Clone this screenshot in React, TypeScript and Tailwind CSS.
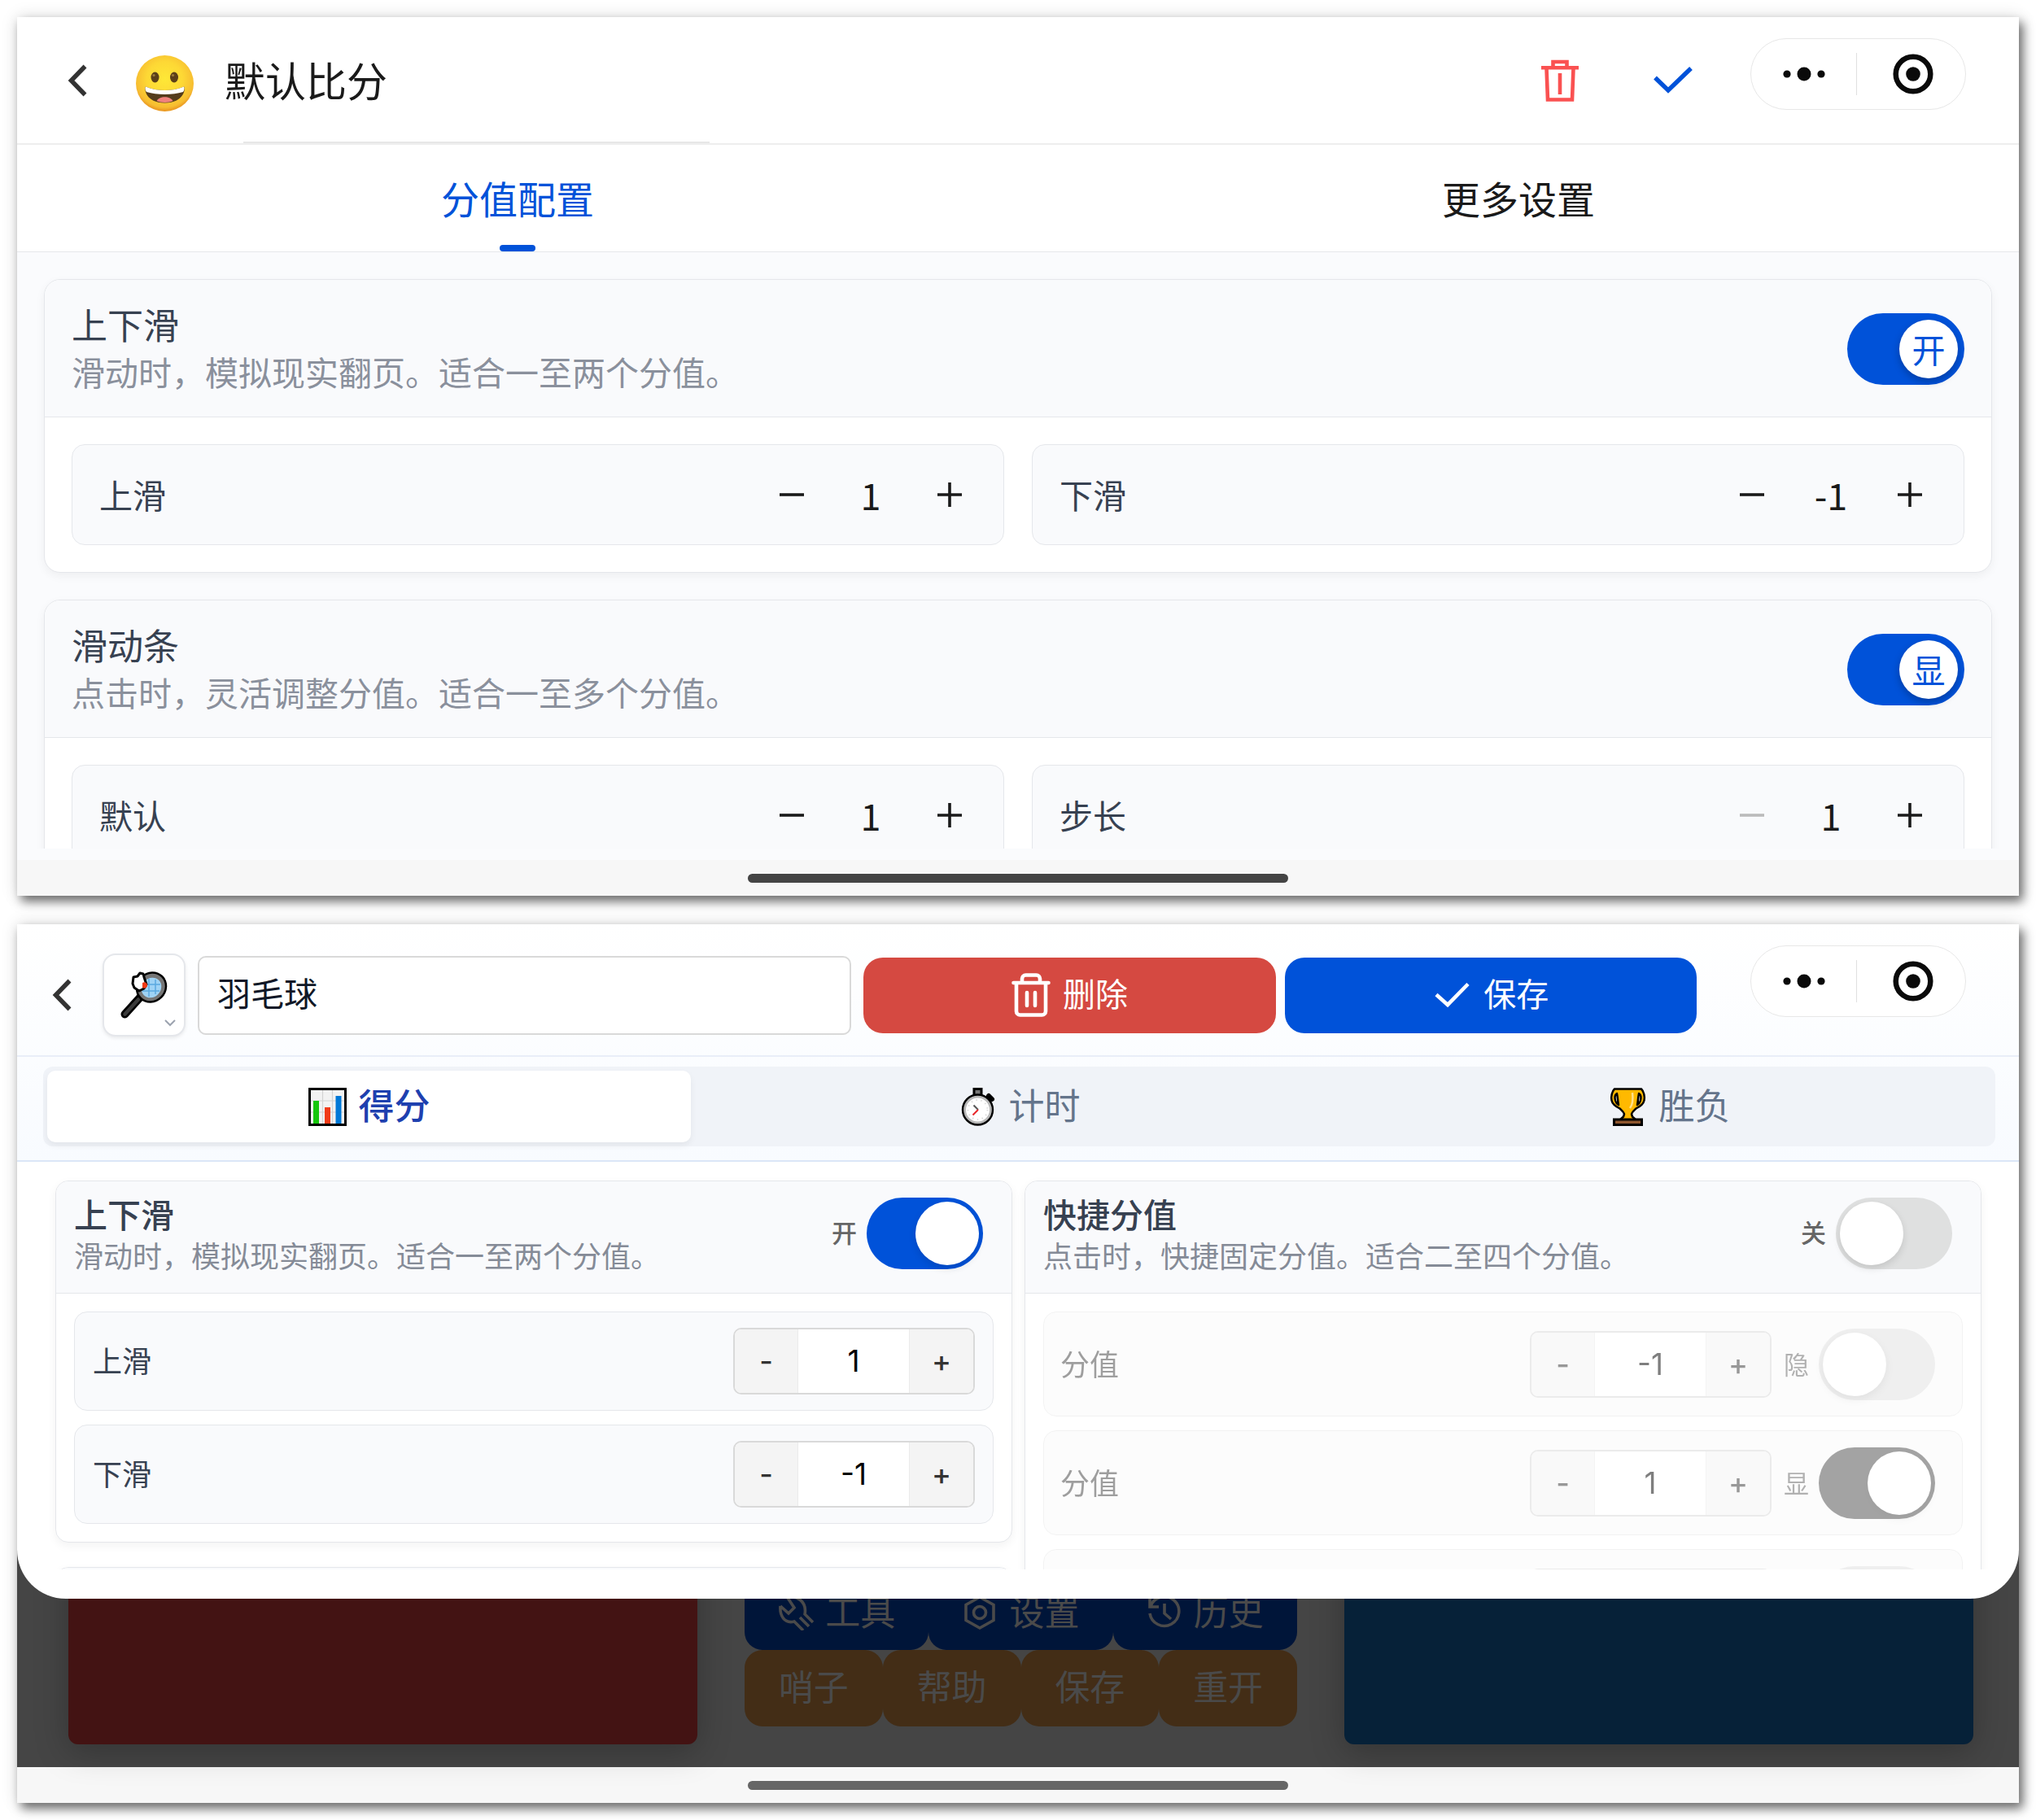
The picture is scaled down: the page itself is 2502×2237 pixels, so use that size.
import React, { useState } from "react";
import clsx from "clsx";

/* ---------- icons ---------- */

function BackIcon() {
  return (
    <svg width="24" height="40" viewBox="0 0 24 40" fill="none" stroke="#333" strokeWidth="5.5">
      <path d="M21.5 2.5 4.5 20l17 17.5" />
    </svg>
  );
}

function GrinEmoji() {
  return (
    <svg width="71" height="79" viewBox="0 0 71 79">
      <defs>
        <radialGradient id="face" cx="50%" cy="42%" r="56%">
          <stop offset="0" stopColor="#fee837" />
          <stop offset="0.55" stopColor="#fdd835" />
          <stop offset="0.9" stopColor="#f7bd31" />
          <stop offset="1" stopColor="#eb9c24" />
        </radialGradient>
      </defs>
      <ellipse cx="35.5" cy="43.5" rx="35.500" ry="34.500" fill="url(#face)" />
      <ellipse cx="23.5" cy="36" rx="5" ry="6.5" fill="#5c4019" />
      <ellipse cx="47" cy="36" rx="5" ry="6.5" fill="#5c4019" />
      <circle cx="22" cy="33.5" r="1.6" fill="#9a7a3c" />
      <circle cx="45.500" cy="33.5" r="1.6" fill="#9a7a3c" />
      <path d="M12 47.500c14 6 33 6 47 0 2.500 2 0 20-23.500 20S10 50 12 47.500z" fill="#543c1c" />
      <path d="M12 47.500c14 6 33 6 47 0 1 1.500.5 5-1 6.500-13 4-32 4-45 0-1.500-1.500-2-5-1-6.500z" fill="#fff" />
      <path d="M25.500 65c3-6.500 17-6.500 20 0-5 2.600-15 2.600-20 0z" fill="#f0827d" />
    </svg>
  );
}

function TrashLineIcon() {
  return (
    <svg width="46" height="52" viewBox="0 0 46 52" fill="none" stroke="#fa5151" strokeWidth="4.6">
      <path d="M14.500 10V3h17v7M0 10.300h46M6.500 11 8 49.500h30L39.500 11M23 17v26" />
    </svg>
  );
}

function CheckLineIcon({ className }: { className?: string }) {
  return (
    <svg className={className} width="48" height="34" viewBox="0 0 48 34" fill="none" stroke="currentColor" strokeWidth="5.400">
      <path d="M2 13.500 18 29 46 2" />
    </svg>
  );
}

function TrashRoundIcon() {
  return (
    <svg width="48" height="54" viewBox="0 0 48 54" fill="none" stroke="#fff" strokeWidth="4.6" strokeLinecap="round" strokeLinejoin="round">
      <path d="M2.500 12h43M13 12V7a4.500 4.500 0 0 1 4.500-4.500h13A4.500 4.500 0 0 1 35 7v5M6 12v35a4.500 4.500 0 0 0 4.500 4.500h27A4.500 4.500 0 0 0 42 47V12M19 24v16M29 24v16" />
    </svg>
  );
}

function SaveCheckIcon() {
  return (
    <svg width="48" height="54" viewBox="0 0 48 54" fill="none" stroke="#fff" strokeWidth="4.6">
      <path d="M5 26.500 19 39 44 13.500" />
    </svg>
  );
}

function RacketEmoji() {
  return (
    <svg width="58" height="58" viewBox="0 0 58 58">
      <path d="M5.500 52.500 24 32" stroke="#000" strokeWidth="10" strokeLinecap="round" />
      <path d="M5.500 52.500 22 34.500" stroke="#3b3b3b" strokeWidth="4.500" strokeLinecap="round" />
      <ellipse cx="38" cy="19.500" rx="20" ry="18.500" fill="#000" transform="rotate(-45 38 19.500)" />
      <ellipse cx="38" cy="19.500" rx="17.500" ry="16" fill="#767676" transform="rotate(-45 38 19.500)" />
      <ellipse cx="38" cy="20" rx="13" ry="11.500" fill="#9fd3f5" transform="rotate(-45 38 20)" />
      <path d="M35 9v22M43 10v18M28 16h21M27 24h21" stroke="#5ba9e0" strokeWidth="1.500" />
      <path d="M15 15l1-8 5-1 3-4 4 1 1 4 3 9-3 5-6 3-6-4z" fill="#fff" stroke="#000" strokeWidth="3" strokeLinejoin="round" />
      <path d="M27 14c3-2 6 0 6 3s-3 5-6 3z" fill="#f03a17" />
    </svg>
  );
}

function ChartEmoji() {
  return (
    <svg width="47" height="47" viewBox="0 0 47 47">
      <rect x="1.500" y="1.500" width="44" height="44" fill="#f2f2f2" stroke="#000" strokeWidth="3" />
      <path d="M17.500 3v41M29.500 3v41M3 16h41M3 30h41" stroke="#d2d2d2" strokeWidth="1.200" />
      <rect x="6" y="16" width="7" height="28" fill="#16c60c" />
      <rect x="20" y="24" width="7" height="20" fill="#f03a17" />
      <rect x="33.500" y="10" width="7" height="34" fill="#0078d7" />
    </svg>
  );
}

function StopwatchEmoji() {
  return (
    <svg width="47" height="47" viewBox="0 0 47 47">
      <rect x="19" y="1.500" width="9" height="9" fill="#777" stroke="#000" strokeWidth="3" />
      <path d="M37 10l4 4" stroke="#000" strokeWidth="6" strokeLinecap="round" />
      <circle cx="23.500" cy="27" r="18.500" fill="#b9b9b9" stroke="#000" strokeWidth="2.400" />
      <circle cx="23.500" cy="27" r="14.500" fill="#fff" />
      <circle cx="23.500" cy="27" r="12" fill="none" stroke="#ddd" strokeWidth="2" strokeDasharray="1.500 4.500" />
      <path d="M18.500 21.500 24 27" stroke="#555" strokeWidth="2" />
      <path d="M24 27l-6.500 6.500" stroke="#e8262a" strokeWidth="2" />
    </svg>
  );
}

function TrophyEmoji() {
  return (
    <svg width="47" height="47" viewBox="0 0 47 47">
      <path d="M7 1.500h33c3 3 4.500 9 3.500 14-1 5-6 8-10 10-2 2-5 4-5.500 7l1 3 5 4.500v5.500H13V40l5-4.500 1-3c-.5-3-3.500-5-5.500-7-4-2-9-5-10-10-1-5 .5-11 3.500-14z" fill="#ffb900" stroke="#000" strokeWidth="2.500" strokeLinejoin="round" />
      <path d="M10 7c-4 2-3 11 2 14-1-5-1-9-2-14zM37 7c4 2 3 11-2 14 1-5 1-9 2-14z" fill="#fff" stroke="#000" strokeWidth="2.500" strokeLinejoin="round" />
      <path d="M29 6c1 8 1 14-3 19" fill="none" stroke="#ffe08a" strokeWidth="2.500" />
      <rect x="6.500" y="39" width="34" height="6.500" fill="#8e562e" stroke="#000" strokeWidth="3" />
    </svg>
  );
}

function ToolIcon() {
  return (
    <svg width="44" height="44" viewBox="0 0 44 44" fill="none" stroke="currentColor" strokeWidth="3.600">
      <path d="M3 14l10 9 7-7L12 4c10-4 24 4 21 20l10 10M3 14c-1 12 5 22 17 19l11 11M27 28l11 11" />
    </svg>
  );
}

function SettingIcon() {
  return (
    <svg width="44" height="44" viewBox="0 0 44 44" fill="none" stroke="currentColor" strokeWidth="3.600">
      <path d="M22 3l17 9.500v19L22 41 5 31.500v-19z" />
      <circle cx="22" cy="22" r="7.500" />
    </svg>
  );
}

function HistoryIcon() {
  return (
    <svg width="44" height="44" viewBox="0 0 44 44" fill="none" stroke="currentColor" strokeWidth="3.600">
      <path d="M4 4v11h11M5 14a18 18 0 1 1-1 9M22 11v12l8 7" />
    </svg>
  );
}

/* ---------- shared parts ---------- */

// mini program menu in the top right corner
function Capsule() {
  return (
    <div className="mt-[26px] flex h-[88px] w-[265px] shrink-0 items-center self-start rounded-full border border-[#e7e7e7] bg-white">
      <button type="button" aria-label="更多" className="flex flex-1 justify-center">
        <svg width="52" height="18" viewBox="0 0 52 18" fill="#0a0a0a">
          <circle cx="5" cy="9" r="4.600" />
          <circle cx="26" cy="9" r="8.500" />
          <circle cx="47" cy="9" r="4.600" />
        </svg>
      </button>
      <span className="h-[52px] w-px bg-[#e0e0e0]" />
      <button type="button" aria-label="关闭" className="flex flex-1 justify-center pl-1">
        <svg width="50" height="50" viewBox="0 0 50 50" fill="none">
          <circle cx="25" cy="25" r="21.300" stroke="#0a0a0a" strokeWidth="6.500" />
          <circle cx="25" cy="25" r="8.800" fill="#0a0a0a" />
        </svg>
      </button>
    </div>
  );
}

function HomeIndicator({ tone }: { tone: string }) {
  return (
    <div className="flex h-11 items-center justify-center bg-[#f7f7f7]">
      <span className={clsx("h-[11px] w-[27%] rounded-full", tone)} />
    </div>
  );
}

/* ---------- first screen ---------- */

function KnobSwitch({ text, label }: { text: string; label: string }) {
  const [on, setOn] = useState(true);
  return (
    <label
      className={clsx(
        "relative flex h-[88px] w-36 shrink-0 items-center rounded-full p-2",
        on ? "justify-end bg-[#0052d9]" : "justify-start bg-[#dfe0e0]"
      )}
    >
      <input type="checkbox" role="switch" aria-label={label} className="sr-only" checked={on} onChange={() => setOn(!on)} />
      <span className="flex size-[72px] items-center justify-center rounded-full bg-white text-[41px] text-[#0052d9] shadow-[0_4px_10px_rgba(0,0,0,0.25)]">
        {text}
      </span>
    </label>
  );
}

function ScoreField({ label, value, minDisabled }: { label: string; value: string; minDisabled?: boolean }) {
  return (
    <div className="flex h-[124px] items-center justify-between rounded-2xl border border-[#e5e7eb] bg-[#f9fafc] px-[33px]">
      <span className="text-[41px] text-[#374151]">{label}</span>
      <div className="flex items-center text-[#1a1a1a]">
        <button
          type="button"
          aria-label="减少"
          disabled={minDisabled}
          className={clsx("flex size-[66px] items-center justify-center", minDisabled && "text-[#bbb]")}
        >
          <svg width="30" height="30" viewBox="0 0 30 30" stroke="currentColor" strokeWidth="3.600">
            <path d="M0 15h30" />
          </svg>
        </button>
        <input aria-label={label} defaultValue={value} className="w-32 bg-transparent text-center text-[45px] leading-[66px]" />
        <button type="button" aria-label="增加" className="flex size-[66px] items-center justify-center">
          <svg width="30" height="30" viewBox="0 0 30 30" stroke="currentColor" strokeWidth="3.600">
            <path d="M0 15h30M15 0v30" />
          </svg>
        </button>
      </div>
    </div>
  );
}

type ConfigCardProps = {
  title: string;
  desc: string;
  knob: string;
  children: React.ReactNode;
};

function ConfigCard({ title, desc, knob, children }: ConfigCardProps) {
  return (
    <section className="shrink-0 overflow-hidden rounded-[20px] border border-[#e5e7eb] bg-white shadow-[0_4px_12px_rgba(0,0,0,0.05)]">
      <header className="flex items-center justify-between border-b border-[#e5e7eb] bg-[#f9fafc] px-[33px] pt-[23px] pb-[22px]">
        <div className="pb-1.5">
          <h2 className="text-[44px] leading-[62px] text-[#374151]">{title}</h2>
          <p className="text-[41px] leading-[55px] text-[#8a909c]">{desc}</p>
        </div>
        <KnobSwitch text={knob} label={title} />
      </header>
      <div className="grid grid-cols-2 gap-[34px] p-[33px]">{children}</div>
    </section>
  );
}

function DefaultScoreScreen() {
  return (
    <article className="bg-white shadow-[5px_7px_12px_rgba(0,0,0,0.55),0_0_20px_rgba(0,0,0,0.12)]">
      <header className="flex h-[157px] items-center border-b-2 border-[#eeeeee] pr-[65px] pl-[62px]">
        <button type="button" aria-label="返回">
          <BackIcon />
        </button>
        <button type="button" aria-label="图标" className="ml-[60px]">
          <GrinEmoji />
        </button>
        <div className="ml-[38px] flex h-full w-[596px] flex-col">
          <input aria-label="名称" defaultValue="默认比分" className="min-h-0 flex-1 text-[50px] text-[#1a1a1a]" />
          <hr className="ml-[23px] border-t-2 border-[#e7e7e7]" />
        </div>
        <button type="button" aria-label="删除" className="ml-auto">
          <TrashLineIcon />
        </button>
        <button type="button" aria-label="保存" className="mr-[71px] ml-[92px]">
          <CheckLineIcon className="text-[#0052d9]" />
        </button>
        <Capsule />
      </header>

      <nav className="grid h-[132px] grid-cols-2 border-b border-[#e5e7eb] text-[47px]">
        <button type="button" className="flex flex-col items-center text-[#0052d9]">
          <span className="flex flex-1 items-center pt-2">分值配置</span>
          <span className="h-2 w-11 rounded-full bg-[#0052d9]" />
        </button>
        <button type="button" className="flex flex-col items-center text-[#1a1a1a]">
          <span className="flex flex-1 items-center pt-2">更多设置</span>
          <span className="h-2 w-11" />
        </button>
      </nav>

      <div className="bg-[#fafbfd] pb-3.5">
        <div className="flex h-[733px] flex-col gap-[33px] overflow-hidden p-[33px]">
          <ConfigCard title="上下滑" desc="滑动时，模拟现实翻页。适合一至两个分值。" knob="开">
            <ScoreField label="上滑" value="1" />
            <ScoreField label="下滑" value="-1" />
          </ConfigCard>
          <ConfigCard title="滑动条" desc="点击时，灵活调整分值。适合一至多个分值。" knob="显">
            <ScoreField label="默认" value="1" />
            <ScoreField label="步长" value="1" minDisabled />
          </ConfigCard>
        </div>
      </div>
      <HomeIndicator tone="bg-[#444444]" />
    </article>
  );
}

/* ---------- second screen ---------- */

type SideSwitchProps = {
  text: string;
  defaultOn?: boolean;
  disabled?: boolean;
};

function SideSwitch({ text, defaultOn = false, disabled }: SideSwitchProps) {
  const [on, setOn] = useState(defaultOn);
  return (
    <label className="relative flex shrink-0 items-center gap-3 text-[31px] text-[#666]">
      <span className={clsx("pb-0.5", !disabled && "font-medium")}>{text}</span>
      <input type="checkbox" role="switch" className="sr-only" checked={on} disabled={disabled} onChange={() => setOn(!on)} />
      <span
        className={clsx(
          "flex h-[88px] w-[143px] items-center rounded-full p-[5px]",
          on ? "justify-end bg-[#0052d9]" : "justify-start bg-[#dfe0e0]"
        )}
      >
        <span className="size-[78px] rounded-full bg-white shadow-[0_4px_10px_rgba(0,0,0,0.12)]" />
      </span>
    </label>
  );
}

function Stepper({ label, value, disabled }: { label: string; value: string; disabled?: boolean }) {
  return (
    <div className="flex h-[82px] w-[297px] shrink-0 overflow-hidden rounded-[10px] border-2 border-[#d9d9d9] bg-white font-['Inter',sans-serif]">
      <button type="button" disabled={disabled} className="w-[78px] border-r border-[#ebebeb] bg-[#f4f4f4] text-[36px] font-medium text-[#333]">
        -
      </button>
      <input
        aria-label={label}
        defaultValue={value}
        disabled={disabled}
        className="min-w-0 flex-1 text-center text-[37px] text-black"
      />
      <button type="button" disabled={disabled} className="w-[79px] border-l border-[#ebebeb] bg-[#f4f4f4] text-[36px] font-medium text-[#333]">
        +
      </button>
    </div>
  );
}

type PanelProps = {
  title: string;
  desc: string;
  status: string;
  on?: boolean;
  children?: React.ReactNode;
};

function Panel({ title, desc, status, on, children }: PanelProps) {
  return (
    <section className="overflow-hidden rounded-2xl border border-[#e5e7eb] bg-white shadow-[0_4px_12px_rgba(0,0,0,0.05)]">
      <header className="flex justify-between border-b border-[#e5e7eb] bg-[#f9fafc] pt-3 pr-[35px] pb-[22px] pl-[22px]">
        <div>
          <h2 className="text-[41px] leading-[54px] font-medium text-[#374151]">{title}</h2>
          <p className="text-[36px] leading-[49px] text-[#858b97]">{desc}</p>
        </div>
        <SideSwitch text={status} defaultOn={on} />
      </header>
      <div className="flex flex-col gap-[17px] p-[22px]">{children}</div>
    </section>
  );
}

function SlideRow({ label, value }: { label: string; value: string }) {
  return (
    <div className="flex h-[122px] items-center justify-between rounded-2xl border border-[#e5e7eb] bg-[#f9fafc] px-[22px]">
      <span className="pb-1 text-[36px] text-[#374151]">{label}</span>
      <Stepper label={label} value={value} />
    </div>
  );
}

function QuickRow({ value, status, on }: { value: string; status: string; on?: boolean }) {
  return (
    <div className="flex items-center justify-between rounded-2xl border border-[#e5e7eb] bg-[#f9fafc] pt-5 pr-[33px] pb-[19px] pl-5 opacity-50 grayscale">
      <span className="pb-1 text-[36px] text-[#374151]">分值</span>
      <div className="flex items-center gap-[15px]">
        <Stepper label="分值" value={value} disabled />
        <SideSwitch text={status} defaultOn={on} disabled />
      </div>
    </div>
  );
}

const tabs = [
  { name: "得分", icon: <ChartEmoji /> },
  { name: "计时", icon: <StopwatchEmoji /> },
  { name: "胜负", icon: <TrophyEmoji /> },
];

function GameBackground() {
  return (
    <div className="-mt-[60px] grid h-[267px] grid-cols-[773fr_679fr_773fr] gap-[58px] bg-[#454545] pr-14 pb-7 pl-[63px]">
      <div className="rounded-b-xl bg-[#431313] shadow-[0_8px_40px_rgba(0,0,0,0.25)]" />
      <div className="pt-[30px] text-[43px] text-[#4a4a4a]">
        <div className="grid grid-cols-3">
          <button type="button" className="flex h-[93px] items-center justify-center gap-3.5 rounded-[22px] bg-[#001539]">
            <ToolIcon />
            <span className="pb-1">工具</span>
          </button>
          <button type="button" className="flex h-[93px] items-center justify-center gap-3.5 rounded-[22px] bg-[#001539]">
            <SettingIcon />
            <span className="pb-1">设置</span>
          </button>
          <button type="button" className="flex h-[93px] items-center justify-center gap-3.5 rounded-[22px] bg-[#001539]">
            <HistoryIcon />
            <span className="pb-1">历史</span>
          </button>
        </div>
        <div className="grid grid-cols-4">
          {["哨子", "帮助", "保存", "重开"].map((name) => (
            <button key={name} type="button" className="h-[94px] rounded-[22px] bg-[#432d16] pb-2">
              {name}
            </button>
          ))}
        </div>
      </div>
      <div className="rounded-b-xl bg-[#062138] shadow-[0_8px_40px_rgba(0,0,0,0.25)]" />
    </div>
  );
}

function BadmintonScreen() {
  const [active, setActive] = useState("得分");

  return (
    <article className="bg-white shadow-[5px_7px_12px_rgba(0,0,0,0.55),0_0_20px_rgba(0,0,0,0.12)]">
      <div className="relative z-10 overflow-hidden rounded-b-[60px] bg-white pb-9">
        <div className="bg-gradient-to-b from-white to-[#f8fbff]">
          <header className="flex border-b-2 border-[#e9eef8] pr-[65px] pl-[43px]">
            <div className="flex flex-1 items-center pt-9 pb-[23px]">
              <button type="button" aria-label="返回">
                <BackIcon />
              </button>
              <button
                type="button"
                aria-label="图标"
                className="relative ml-[38px] flex size-[102px] shrink-0 items-center justify-center rounded-2xl border-2 border-[#e5e7eb] bg-white shadow-[0_2px_4px_rgba(0,0,0,0.08)]"
              >
                <RacketEmoji />
                <svg className="absolute right-2.5 bottom-2.5" width="14" height="9" viewBox="0 0 14 9" fill="none" stroke="#9ca3af" strokeWidth="2">
                  <path d="M1 1l6 6 6-6" />
                </svg>
              </button>
              <input
                aria-label="名称"
                defaultValue="羽毛球"
                className="ml-[15px] h-[97px] min-w-0 flex-[755] rounded-[10px] border-2 border-[#d9d9d9] bg-white px-[22px] pb-2 text-[41px] text-[#111827]"
              />
              <button
                type="button"
                className="ml-[15px] flex h-[93px] flex-[506] items-center justify-center gap-[15px] rounded-3xl bg-[#d54941] text-[40px] text-white"
              >
                <TrashRoundIcon />
                <span className="pb-1.5">删除</span>
              </button>
              <button
                type="button"
                className="ml-[11px] flex h-[93px] flex-[506] items-center justify-center gap-[15px] rounded-3xl bg-[#0052d9] text-[40px] text-white"
              >
                <SaveCheckIcon />
                <span className="pb-1.5">保存</span>
              </button>
            </div>
            <div className="ml-[66px] flex">
              <Capsule />
            </div>
          </header>

          <nav className="border-b-2 border-[#dbe6f7] pt-3 pr-[29px] pb-[17px] pl-8">
            <div className="grid grid-cols-3 gap-2 rounded-xl bg-[#f0f3f8] p-[5px]">
              {tabs.map((tab) => (
                <button
                  key={tab.name}
                  type="button"
                  onClick={() => setActive(tab.name)}
                  className={clsx(
                    "flex h-[88px] items-center justify-center gap-[15px] rounded-[10px] text-[44px] leading-[60px]",
                    active === tab.name
                      ? "bg-white font-medium text-[#1e40af] shadow-[0_4px_8px_rgba(0,0,0,0.06)]"
                      : "text-[#64748b]"
                  )}
                >
                  {tab.icon}
                  <span className="pb-1.5">{tab.name}</span>
                </button>
              ))}
            </div>
          </nav>
        </div>

        <div className="grid h-[501px] grid-cols-2 items-start gap-[15px] overflow-hidden pt-[23px] pr-[46px] pl-[47px]">
          <div className="flex flex-col gap-[30px]">
            <Panel title="上下滑" desc="滑动时，模拟现实翻页。适合一至两个分值。" status="开" on>
              <SlideRow label="上滑" value="1" />
              <SlideRow label="下滑" value="-1" />
            </Panel>
            <Panel title="滑动条" desc="点击时，灵活调整分值。适合一至多个分值。" status="开" on />
          </div>
          <Panel title="快捷分值" desc="点击时，快捷固定分值。适合二至四个分值。" status="关">
            <QuickRow value="-1" status="隐" />
            <QuickRow value="1" status="显" on />
            <QuickRow value="2" status="隐" />
          </Panel>
        </div>
      </div>
      <GameBackground />
      <HomeIndicator tone="bg-[#666666]" />
    </article>
  );
}

function App() {
  return (
    <main className="flex min-h-screen flex-col gap-[35px] bg-white p-[21px] font-['Noto_Sans_CJK_SC',sans-serif]">
      <DefaultScoreScreen />
      <BadmintonScreen />
    </main>
  );
}

export default App;
